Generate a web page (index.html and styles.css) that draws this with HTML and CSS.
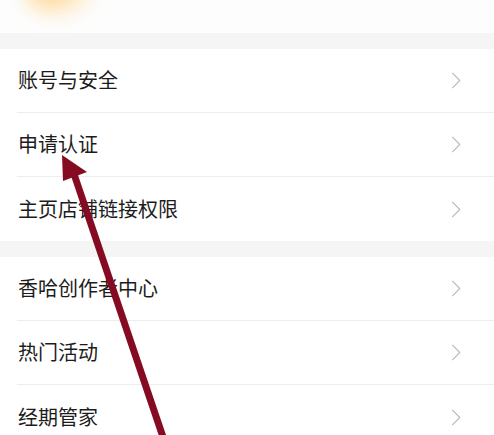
FILE: index.html
```html
<!DOCTYPE html>
<html lang="zh-CN">
<head>
  <meta charset="UTF-8">
  <title>设置</title>
  <link rel="stylesheet" href="styles.css">
</head>
<body>
  <div class="top-card"><div class="blob"></div></div>

  <div class="group">
    <div class="row"><span>账号与安全</span><svg class="chev" viewBox="0 0 10 18"><path d="M1 1 L9 9 L1 17"/></svg></div>
    <div class="row"><span>申请认证</span><svg class="chev" viewBox="0 0 10 18"><path d="M1 1 L9 9 L1 17"/></svg></div>
    <div class="row"><span>主页店铺链接权限</span><svg class="chev" viewBox="0 0 10 18"><path d="M1 1 L9 9 L1 17"/></svg></div>
  </div>

  <div class="group">
    <div class="row"><span>香哈创作者中心</span><svg class="chev" viewBox="0 0 10 18"><path d="M1 1 L9 9 L1 17"/></svg></div>
    <div class="row"><span>热门活动</span><svg class="chev" viewBox="0 0 10 18"><path d="M1 1 L9 9 L1 17"/></svg></div>
    <div class="row"><span>经期管家</span><svg class="chev" viewBox="0 0 10 18"><path d="M1 1 L9 9 L1 17"/></svg></div>
  </div>

  <svg class="pointer" width="494" height="435" viewBox="0 0 494 435">
    <line x1="74" y1="174" x2="164" y2="440" stroke="#850b22" stroke-width="7"/>
    <polygon points="62,155 87,172 63,181" fill="#850b22"/>
  </svg>
</body>
</html>
```

FILE: styles.css
```css
body { margin: 0; background: #f5f5f5; font-family: "Noto Sans CJK SC", "Noto Sans", sans-serif; color: #1c1c1c; overflow: hidden; }
.top-card { height: 33px; background: #fdfdfd; position: relative; overflow: hidden; }
.blob { position: absolute; left: 22px; top: -28px; width: 76px; height: 50px; border-radius: 50%; background: radial-gradient(ellipse at 40% 40%, #fcd28c 0%, #feeccd 40%, rgba(253,253,253,0) 75%); filter: blur(7px); }
.group { background: #fff; margin-top: 16px; padding-left: 17px; }
.row { height: 63px; display: flex; align-items: center; justify-content: space-between; border-bottom: 1px solid #ededed; padding-right: 33px; font-size: 20px; }
.row span { padding-left: 1px; margin-top: -2px; }
.row:last-child { border-bottom: none; height: 64px; }
.chev { width: 10px; height: 17px; fill: none; stroke: #b9b9b9; stroke-width: 1.2; }
.pointer { position: absolute; left: 0; top: 0; pointer-events: none; }
```
